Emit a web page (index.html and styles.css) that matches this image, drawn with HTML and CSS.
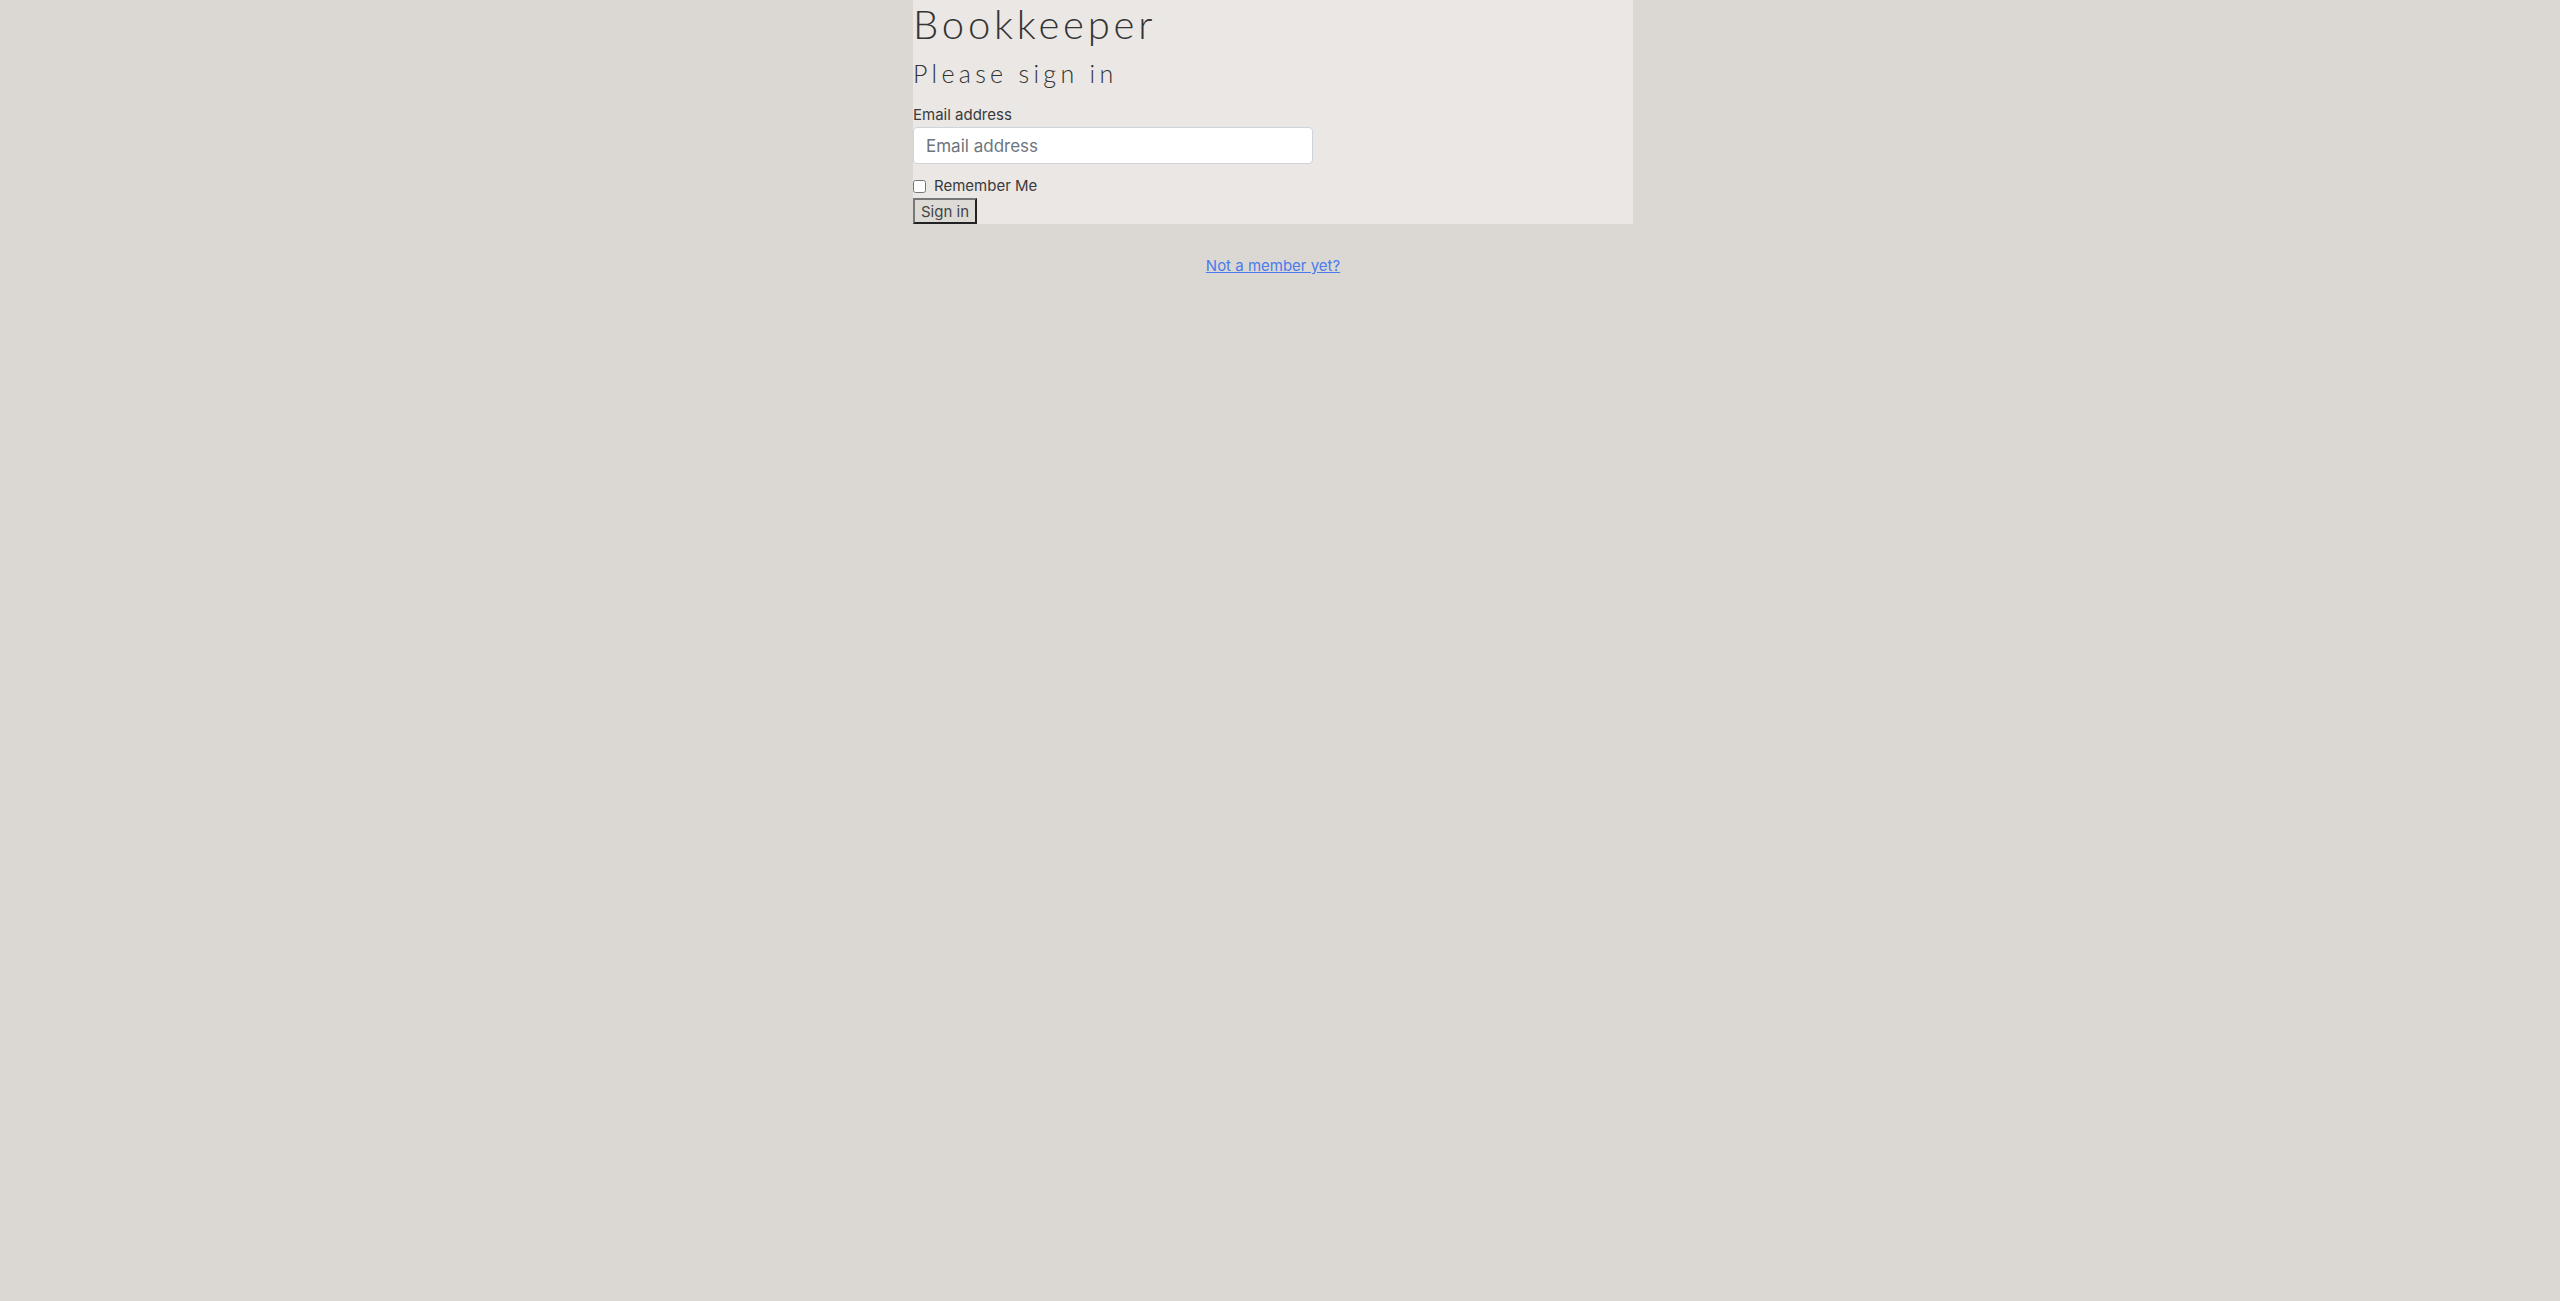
FILE: index.html
```html
<!DOCTYPE html>
<html lang="en">
<head>
<meta charset="utf-8">
<title>Bookkeeper - Sign in</title>
<link rel="stylesheet" href="styles.css">
</head>
<body>
<div class="page">
  <main class="panel">
    <h1 class="title">Bookkeeper</h1>
    <h2 class="subtitle">Please sign in</h2>
    <form class="form">
      <label class="label" for="email">Email address</label>
      <input class="input" id="email" type="email" placeholder="Email address">
      <div class="check-row">
        <input class="check" type="checkbox" id="remember">
        <label class="check-label" for="remember">Remember Me</label>
      </div>
      <button class="btn" type="button">Sign in</button>
    </form>
  </main>
  <div class="signup">
    <a class="signup-link" href="#">Not a member yet?</a>
  </div>
</div>
</body>
</html>
```
FILE: styles.css
```css
html, body {
  margin: 0;
  padding: 0;
  background: #dbd8d3;
  font-family: "Inter", "Liberation Sans", sans-serif;
  color: #333333;
}
.page {
  width: 720px;
  margin: 0 auto;
  padding-right: 14px;
}
.panel {
  background: #eae7e4;
  display: flex;
  flex-direction: column;
  align-items: flex-start;
}
.title {
  margin: 0;
  font-family: "Lato", "Liberation Sans", sans-serif;
  font-weight: 300;
  font-size: 40px;
  line-height: 48px;
  letter-spacing: 3.8px;
  color: #333333;
}
.subtitle {
  margin: 10px 0 0;
  font-family: "Lato", "Liberation Sans", sans-serif;
  font-weight: 300;
  font-size: 25px;
  line-height: 30px;
  letter-spacing: 4.3px;
  color: #333333;
}
.form {
  display: flex;
  flex-direction: column;
  align-items: flex-start;
  margin-top: 17px;
}
.label {
  font-size: 15px;
  line-height: 20px;
  color: #3a3a3a;
}
.input {
  margin-top: 2px;
  box-sizing: border-box;
  width: 400px;
  height: 37px;
  padding: 0 12px;
  border: 1px solid #ced4da;
  border-radius: 4px;
  background: #ffffff;
  font-family: "Inter", "Liberation Sans", sans-serif;
  font-size: 17px;
  color: #495057;
}
.input::placeholder {
  color: #6c757d;
}
.check-row {
  margin-top: 12px;
  height: 20px;
  display: flex;
  align-items: center;
  gap: 8px;
}
.check {
  margin: 0;
  width: 13px;
  height: 13px;
}
.check-label {
  font-size: 15px;
  line-height: 20px;
  color: #3a3a3a;
}
.btn {
  margin-top: 2px;
  box-sizing: border-box;
  height: 26px;
  width: 64px;
  padding: 0 0 0 6px;
  text-align: left;
  border: 2px outset #777777;
  background: #dedad6;
  font-family: "Inter", "Liberation Sans", sans-serif;
  font-size: 15px;
  color: #444444;
}
.signup {
  margin-top: 32px;
  text-align: center;
  font-size: 15px;
  line-height: 20px;
}
.signup-link {
  color: #4a7aee;
  text-decoration: underline;
}
```
